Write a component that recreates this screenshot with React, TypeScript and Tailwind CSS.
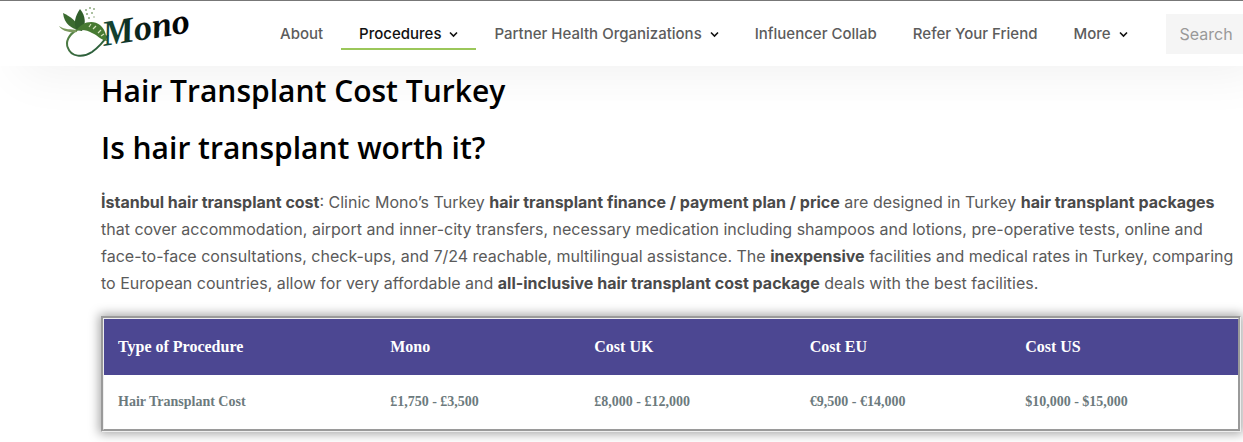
import React from "react";

function Chevron() {
  return (
    <svg width="9" height="8" viewBox="0 0 9 8" fill="none" stroke="#111" strokeWidth="1.6" aria-hidden="true">
      <path d="M1 1.5 L4.5 5 L8 1.5" />
    </svg>
  );
}

function Logo() {
  return (
    <svg width="140" height="64" viewBox="0 0 140 64" className="overflow-visible" role="img" aria-label="Mono">
      <defs>
        <linearGradient id="ring" x1="0" y1="0" x2="1" y2="1">
          <stop offset="0" stopColor="#5d8a48" />
          <stop offset="1" stopColor="#1a4f36" />
        </linearGradient>
        <linearGradient id="word" x1="0" y1="0" x2="1" y2="0">
          <stop offset="0" stopColor="#17503a" />
          <stop offset="0.6" stopColor="#08140e" />
          <stop offset="1" stopColor="#000" />
        </linearGradient>
      </defs>
      <path
        d="M22 28 C14 32 10 40 13 46 C16 55 28 56 37 50 C44 45 49 39 53 33"
        fill="none"
        stroke="url(#ring)"
        strokeWidth="2"
      />
      <path d="M24 28 C17 27 9 22 8 11 C15 14 21 19 25 26 Z" fill="#3b6b30" />
      <path d="M22 28 C18 22 20 14 25 7 C31 14 31 23 27 29 Z" fill="#315f2b" />
      <path d="M22 30 C14 31 7 29 4 24 C10 28 16 27 22 28 Z" fill="#7c9a5f" />
      <path d="M21 29 C26 20 38 17 45 23 C51 28 51 34 52 39 C45 38 43 33 37 31 C32 28 27 27 21 29 Z" fill="#477a32" />
      <path d="M34 25 L36 22 M38 27 L41 24 M43 31 L46 28 M46 34 L49 32" stroke="#d4e2bd" strokeWidth="1.2" />
      <g fill="#8fab80">
        <circle cx="31" cy="8" r="1" />
        <circle cx="35" cy="6" r="1" />
        <circle cx="39" cy="7" r="1" />
        <circle cx="32" cy="12" r="1.1" />
        <circle cx="37" cy="11" r="1" />
        <circle cx="34" cy="16" r="1" />
        <circle cx="39" cy="15" r="0.8" />
      </g>
      <text
        x="49"
        y="44"
        transform="rotate(-9 49 44)"
        fill="url(#word)"
        fontFamily="'Brush Script MT', 'Liberation Serif', serif"
        fontSize="36"
        fontStyle="italic"
        fontWeight="700"
      >
        Mono
      </text>
    </svg>
  );
}

const links = [
  { label: "About" },
  { label: "Procedures", menu: true, active: true },
  { label: "Partner Health Organizations", menu: true },
  { label: "Influencer Collab" },
  { label: "Refer Your Friend" },
  { label: "More", menu: true },
];

const columns = [
  { title: "Type of Procedure", value: "Hair Transplant Cost", width: "w-[24%]" },
  { title: "Mono", value: "£1,750 - £3,500", width: "w-[18%]" },
  { title: "Cost UK", value: "£8,000 - £12,000", width: "w-[19%]" },
  { title: "Cost EU", value: "€9,500 - €14,000", width: "w-[19%]" },
  { title: "Cost US", value: "$10,000 - $15,000", width: "w-[20%]" },
];

export default function App() {
  return (
    <div className="overflow-hidden bg-white font-['Inter',sans-serif]">
      <header className="flex h-[66px] items-center border-t border-[#777] bg-white pl-[55px] shadow-[20px_8px_50px_rgba(0,0,0,0.06)]">
        <a href="#home" className="shrink-0">
          <Logo />
        </a>
        <nav className="ml-[67px] flex shrink-0">
          {links.map((link) => (
            <a
              key={link.label}
              href="#menu"
              className={
                link.active
                  ? "flex h-8 items-center gap-2 border-b-2 border-[#9bc75a] px-[18px] pt-1 text-[15px] font-medium text-[#111]"
                  : "flex h-8 items-center gap-2 border-b-2 border-transparent px-[18px] pt-1 text-[15px] font-medium text-[#5c5c5c]"
              }
            >
              {link.label}
              {link.menu && <Chevron />}
            </a>
          ))}
        </nav>
        <input
          type="text"
          aria-label="Search"
          placeholder="Search"
          className="ml-5 h-10 min-w-0 flex-1 bg-[#f5f5f5] pl-3.5 text-base outline-none placeholder:text-[#999]"
        />
      </header>

      <main className="pl-[101px] pr-[2px]">
        <h1 className="mt-1.5 font-['Open_Sans',sans-serif] text-[30px] leading-[38px] font-semibold text-black">
          Hair Transplant Cost Turkey
        </h1>
        <h2 className="mt-[19px] font-['Open_Sans',sans-serif] text-[30px] leading-[38px] font-semibold text-black">
          Is hair transplant worth it?
        </h2>
        <p className="mt-[22px] text-base leading-[27px] text-[#5a5a5a] [&>strong]:font-bold [&>strong]:text-[#4a4a4a]">
          <strong>İstanbul hair transplant cost</strong>: Clinic Mono’s Turkey{" "}
          <strong>hair transplant finance / payment plan / price</strong> are designed in Turkey{" "}
          <strong>hair transplant packages</strong> that cover accommodation, airport and inner-city transfers,
          necessary medication including shampoos and lotions, pre-operative tests, online and face-to-face
          consultations, check-ups, and 7/24 reachable, multilingual assistance. The <strong>inexpensive</strong>{" "}
          facilities and medical rates in Turkey, comparing to European countries, allow for very affordable and{" "}
          <strong>all-inclusive hair transplant cost package</strong> deals with the best facilities.
        </p>

        <div className="mt-[19px] mb-3 border-[3px] border-[#eee] shadow-[0_0_10px_2px_rgba(0,0,0,0.35)] [border-style:groove]">
          <table className="w-full table-fixed border-collapse text-left font-['Liberation_Serif',serif] font-bold">
            <thead className="bg-[#4c4792] text-base text-white">
              <tr>
                {columns.map((c) => (
                  <th key={c.title} scope="col" className={`h-14 pl-3.5 ${c.width}`}>
                    {c.title}
                  </th>
                ))}
              </tr>
            </thead>
            <tbody className="bg-white text-sm text-[#6c7a7d]">
              <tr>
                {columns.map((c) => (
                  <td key={c.title} className="h-[54px] pl-3.5">
                    {c.value}
                  </td>
                ))}
              </tr>
            </tbody>
          </table>
        </div>
      </main>
    </div>
  );
}
